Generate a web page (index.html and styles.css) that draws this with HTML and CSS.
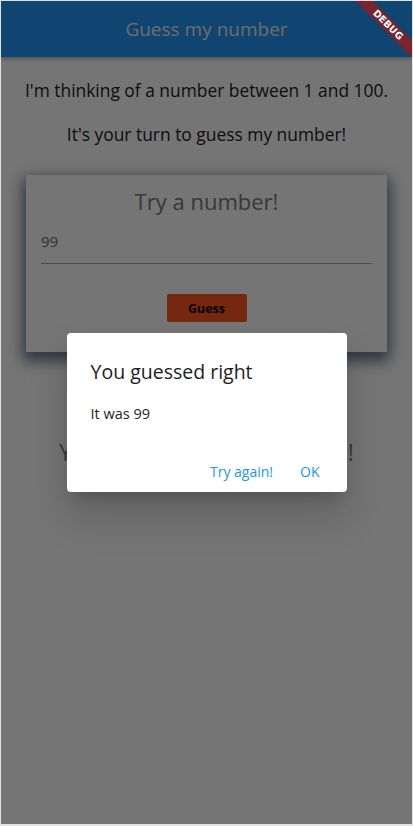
FILE: index.html
```html
<!DOCTYPE html>
<html>
<head>
<meta charset="utf-8">
<link rel="stylesheet" href="styles.css">
</head>
<body>
<div class="screen">
  <header class="appbar">
    <h1 class="appbar-title">Guess my number</h1>
  </header>
  <main class="content">
    <p class="intro">I'm thinking of a number between 1 and 100.</p>
    <p class="intro">It's your turn to guess my number!</p>
    <section class="card">
      <h2 class="card-title">Try a number!</h2>
      <div class="field">99</div>
      <div class="card-actions">
        <button class="guess-btn">Guess</button>
      </div>
    </section>
    <p class="tries">You got it in only 5 guesses!</p>
  </main>
  <div class="barrier"></div>
  <div class="dialog-layer">
    <div class="dialog">
      <h3 class="dialog-title">You guessed right</h3>
      <p class="dialog-body">It was 99</p>
      <div class="dialog-actions">
        <button class="text-btn">Try again!</button>
        <button class="text-btn">OK</button>
      </div>
    </div>
  </div>
  <div class="debug-banner">DEBUG</div>
</div>
</body>
</html>
```
FILE: styles.css
```css
* { box-sizing: border-box; }
html, body { margin: 0; padding: 0; }
body {
  font-family: "Open Sans", "Noto Sans", sans-serif;
  background: #e6e6e6;
}
.screen {
  position: relative;
  width: 413px;
  height: 826px;
  border: 1px solid #e3e3e3;
  border-bottom-width: 2px;
  background: #ffffff;
  overflow: hidden;
}
.appbar {
  height: 56px;
  background: #2196f3;
  display: flex;
  align-items: center;
  justify-content: center;
  box-shadow: 0 2px 4px rgba(0,0,0,0.3);
  position: relative;
}
.appbar-title {
  margin: 0;
  font-size: 19px;
  font-weight: 400;
  color: #ececec;
}
.content {
  display: flex;
  flex-direction: column;
  align-items: center;
  padding-top: 22px;
}
.intro {
  margin: 0 0 22px;
  font-size: 17.4px;
  line-height: 22px;
  color: #222;
}
.card {
  width: 361px;
  margin-top: 8px;
  background: #fff;
  box-shadow: 0 6px 14px 3px rgba(10,40,80,0.65);
  padding: 11px 15px 30px;
  display: flex;
  flex-direction: column;
}
.card-title {
  margin: 0;
  text-align: center;
  font-size: 22px;
  font-weight: 400;
  line-height: 30px;
  color: #7a7a7a;
}
.field {
  margin-top: 15px;
  padding-bottom: 12px;
  font-size: 15px;
  line-height: 20px;
  color: #6a6a6a;
  border-bottom: 1px solid #a8a8a8;
}
.card-actions {
  display: flex;
  justify-content: center;
  margin-top: 30px;
}
.guess-btn {
  width: 80px;
  height: 28px;
  border: none;
  border-radius: 2px;
  background: #ff5722;
  font-family: inherit;
  font-size: 12.5px;
  font-weight: 700;
  color: #000;
  padding: 0;
}
.tries {
  margin: 85px 0 0;
  font-size: 23px;
  line-height: 30px;
  color: #7a7a7a;
  white-space: nowrap;
}
.barrier {
  position: absolute;
  inset: 0;
  background: rgba(0,0,0,0.54);
}
.dialog-layer {
  position: absolute;
  inset: 0;
  display: flex;
  justify-content: center;
  padding-top: 332px;
}
.dialog {
  width: 280px;
  height: 159px;
  background: #fff;
  border-radius: 4px;
  box-shadow: 0 11px 15px -7px rgba(0,0,0,0.2), 0 24px 38px 3px rgba(0,0,0,0.14);
  padding: 26px 24px 0;
  display: flex;
  flex-direction: column;
}
.dialog-title {
  margin: 0;
  font-size: 19.5px;
  font-weight: 400;
  line-height: 26px;
  color: #1d1d1d;
}
.dialog-body {
  margin: 19px 0 0;
  font-size: 14.5px;
  line-height: 20px;
  color: #222;
}
.dialog-actions {
  margin-top: auto;
  display: flex;
  justify-content: flex-end;
  gap: 11px;
  padding-bottom: 3px;
  margin-right: -5px;
}
.text-btn {
  border: none;
  background: transparent;
  font-family: inherit;
  font-size: 14px;
  font-weight: 500;
  color: #2196f3;
  height: 36px;
  padding: 0 8px;
}
.debug-banner {
  position: absolute;
  left: 337px;
  top: 18px;
  width: 100px;
  height: 12px;
  transform: rotate(45deg);
  background: #7a2430;
  color: #fff;
  font-family: "DejaVu Sans", sans-serif;
  font-size: 9.5px;
  font-weight: 700;
  line-height: 12px;
  text-align: center;
  letter-spacing: 0.2px;
}
```
